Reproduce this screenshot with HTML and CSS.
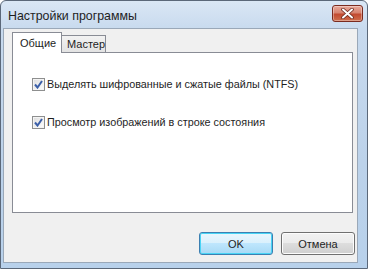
FILE: index.html
```html
<!DOCTYPE html>
<html>
<head>
<meta charset="utf-8">
<link rel="stylesheet" href="styles.css">
</head>
<body>
<div class="window">
  <div class="titlebar">
    <span class="title">Настройки программы</span>
    <span class="close">
      <svg width="13" height="11" viewBox="0 0 13 11"><path d="M2 1.5 L11 9.5 M11 1.5 L2 9.5" stroke="#6b2a20" stroke-width="3.6" stroke-linecap="round"/><path d="M2 1.5 L11 9.5 M11 1.5 L2 9.5" stroke="#ffffff" stroke-width="2" stroke-linecap="round"/></svg>
    </span>
  </div>
  <div class="client">
    <div class="tabs">
      <div class="tab active">Общие</div>
      <div class="tab">Мастер</div>
    </div>
    <div class="panel">
      <label class="check"><span class="box"><svg width="9" height="9" viewBox="0 0 9 9"><path d="M1 4.5 L3.5 7.5 L8 1" fill="none" stroke="#3b5fa8" stroke-width="2"/></svg></span>Выделять шифрованные и сжатые файлы (NTFS)</label>
      <label class="check"><span class="box"><svg width="9" height="9" viewBox="0 0 9 9"><path d="M1 4.5 L3.5 7.5 L8 1" fill="none" stroke="#3b5fa8" stroke-width="2"/></svg></span>Просмотр изображений в строке состояния</label>
    </div>
    <div class="buttons">
      <button class="btn default">OK</button>
      <button class="btn">Отмена</button>
    </div>
  </div>
</div>
</body>
</html>
```
FILE: styles.css
```css
html, body {
  margin: 0;
  padding: 0;
  background: #ffffff;
}
body {
  font-family: "Liberation Sans", "DejaVu Sans", sans-serif;
}
.window {
  box-sizing: border-box;
  width: 368px;
  height: 269px;
  border: 1px solid #5b6879;
  border-radius: 6px 6px 0 0;
  background: linear-gradient(to bottom, #dae7f5 0px, #c8daee 28px, #bcd2ea 60%, #b8d1eb 100%);
  display: flex;
  flex-direction: column;
  padding: 0 9px 5px 2px;
}
.titlebar {
  height: 27px;
  flex: none;
  display: flex;
  align-items: center;
  padding-left: 5px;
}
.title {
  font-family: "Liberation Sans", "DejaVu Sans", sans-serif;
  font-size: 12.4px;
  color: #1e1e1e;
  margin-top: 2px;
}
.close {
  margin-left: auto;
  margin-right: -5px;
  margin-top: -2px;
  box-sizing: border-box;
  width: 31px;
  height: 17px;
  border: 1px solid #7a2b1f;
  border-radius: 3px;
  background: linear-gradient(to bottom, #e9a99a 0%, #d78471 45%, #c24a30 55%, #cf6f4e 100%);
  display: flex;
  align-items: center;
  justify-content: center;
  box-shadow: inset 0 0 0 1px rgba(255,255,255,0.35);
}
.client {
  flex: 1;
  background: #f0f0f0;
  border: 1px solid #9aa8b8;
  padding: 3px 4px 0 8px;
  display: flex;
  flex-direction: column;
}
.tabs {
  display: flex;
  align-items: flex-end;
  height: 20px;
  flex: none;
  position: relative;
  z-index: 1;
}
.tab {
  box-sizing: border-box;
  font-size: 11px;
  color: #1e1e1e;
  height: 17px;
  width: 44px;
  padding: 0 0 0 5px;
  border: 1px solid #898c95;
  border-bottom: none;
  border-left: none;
  background: linear-gradient(to bottom, #f2f2f2, #e3e3e3);
  line-height: 17px;
}
.tab.active {
  height: 21px;
  width: 50px;
  padding-left: 7px;
  margin-bottom: -1px;
  border-left: 1px solid #898c95;
  background: #ffffff;
  line-height: 20px;
}
.panel {
  box-sizing: border-box;
  height: 161px;
  flex: none;
  background: #ffffff;
  border: 1px solid #898c95;
  padding: 23px 0 0 19px;
  display: flex;
  flex-direction: column;
  gap: 22px;
}
.check {
  display: flex;
  align-items: center;
  font-size: 10.8px;
  color: #1e1e1e;
  height: 16px;
}
.box {
  box-sizing: border-box;
  width: 13px;
  height: 13px;
  border: 1px solid #8e8f8f;
  background: linear-gradient(135deg, #dcdcdc, #ffffff);
  display: flex;
  align-items: center;
  justify-content: center;
  margin-right: 2px;
  box-shadow: inset 0 0 0 1px #f4f4f4;
}
.buttons {
  display: flex;
  justify-content: flex-end;
  gap: 8px;
  margin-top: 19px;
  margin-right: -2px;
}
.btn {
  box-sizing: border-box;
  width: 74px;
  height: 23px;
  font-family: "Liberation Sans", "DejaVu Sans", sans-serif;
  font-size: 11px;
  color: #1e1e1e;
  border: 1px solid #707070;
  border-radius: 3px;
  background: linear-gradient(to bottom, #f2f2f2 0%, #ebebeb 49%, #dddddd 50%, #cfcfcf 100%);
  box-shadow: inset 0 0 0 1px #fcfcfc;
  padding: 0;
}
.btn.default {
  border-color: #3c7fb1;
  background: linear-gradient(to bottom, #eaf6fd 0%, #d9f0fc 49%, #bee6fd 50%, #a7d9f5 100%);
  box-shadow: inset 0 0 0 1px #48d4f5;
}
```
